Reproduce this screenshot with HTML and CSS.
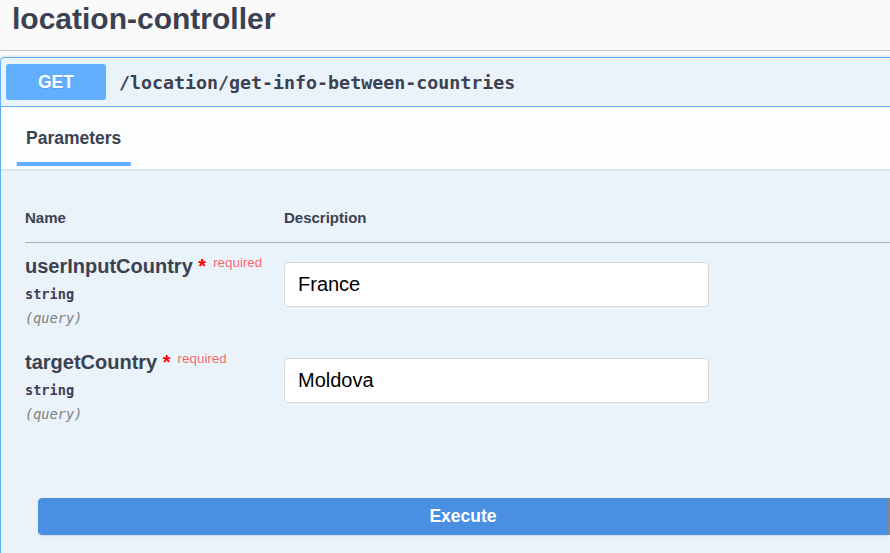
FILE: index.html
```html
<!DOCTYPE html>
<html lang="en">
<head>
<meta charset="utf-8">
<title>location-controller</title>
<link rel="stylesheet" href="styles.css">
</head>
<body>
<div class="wrap">
  <h4 class="tag">location-controller</h4>
  <div class="opblock">
    <div class="summary">
      <span class="method">GET</span>
      <span class="path">/location/get-info-between-countries</span>
    </div>
    <div class="tabs">
      <h4 class="tab">Parameters</h4>
    </div>
    <div class="params">
      <table class="ptable">
        <thead>
          <tr><th class="col-name">Name</th><th class="col-desc">Description</th></tr>
        </thead>
        <tbody>
          <tr>
            <td class="col-name">
              <div class="pname">userInputCountry<span class="star">&nbsp;*</span><span class="req">required</span></div>
              <div class="ptype">string</div>
              <div class="pin">(query)</div>
            </td>
            <td class="col-desc"><input class="pinput" type="text" value="France"></td>
          </tr>
          <tr>
            <td class="col-name">
              <div class="pname">targetCountry<span class="star">&nbsp;*</span><span class="req">required</span></div>
              <div class="ptype">string</div>
              <div class="pin">(query)</div>
            </td>
            <td class="col-desc"><input class="pinput" type="text" value="Moldova"></td>
          </tr>
        </tbody>
      </table>
    </div>
    <div class="btn-group">
      <button class="btn execute">Execute</button>
      <button class="btn clear" aria-label="Clear"></button>
    </div>
  </div>
</div>
</body>
</html>
```

FILE: styles.css
```css
html, body {
  margin: 0;
  padding: 0;
}
body {
  background: #fafafa;
  overflow: hidden;
  font-family: "Liberation Sans", Arial, sans-serif;
  color: #3b4151;
}
.wrap {
  width: 1800px;
}
.tag {
  margin: 0 0 6px 0;
  padding: 0 0 0 12px;
  height: 50px;
  line-height: 38px;
  font-size: 30px;
  font-weight: bold;
  color: #3b4151;
  border-bottom: 1px solid rgba(59, 65, 81, 0.3);
  box-sizing: content-box;
}
.opblock {
  border: 1px solid #61affe;
  border-radius: 4px;
  background: rgba(97, 175, 254, 0.1);
  box-shadow: 0 0 3px rgba(0, 0, 0, 0.19);
}
.summary {
  display: flex;
  align-items: center;
  padding: 6px 6px 6px 5px;
  height: 36px;
  border-bottom: 1px solid #61affe;
  box-sizing: content-box;
}
.method {
  width: 100px;
  height: 36px;
  line-height: 36px;
  text-align: center;
  background: #61affe;
  color: #fff;
  border-radius: 3px;
  font-size: 17.5px;
  font-weight: bold;
  text-shadow: 0 1px 0 rgba(0, 0, 0, 0.1);
}
.path {
  padding-left: 13px;
  font-family: "DejaVu Sans Mono", "Liberation Mono", monospace;
  font-size: 18.3px;
  font-weight: bold;
  color: #3b4151;
}
.tabs {
  display: flex;
  align-items: flex-start;
  height: 62px;
  padding: 0 25px;
  background: rgba(255, 255, 255, 0.8);
  box-shadow: 0 1px 2px rgba(0, 0, 0, 0.1);
}
.tab {
  position: relative;
  margin: 21px 0 0 0;
  font-size: 17.5px;
  line-height: 20px;
  font-weight: bold;
  color: #3b4151;
}
.tab::after {
  content: "";
  position: absolute;
  top: 34px;
  left: 50%;
  width: 120%;
  height: 4px;
  transform: translateX(-50%);
  background: #61affe;
}
.params {
  padding: 25px 0 25px 24px;
}
.ptable {
  border-collapse: collapse;
  width: 1600px;
}
.ptable th {
  text-align: left;
  font-size: 15px;
  line-height: 18px;
  font-weight: bold;
  padding: 15px 0;
  border-bottom: 1px solid rgba(59, 65, 81, 0.2);
}
.ptable th.col-name,
.ptable td.col-name {
  width: 259px;
}
.ptable td {
  vertical-align: top;
  padding: 11px 0 12px 0;
}
.pname {
  font-size: 20px;
  line-height: 24px;
  height: 24px;
  font-weight: bold;
  color: #3b4151;
  white-space: nowrap;
}
.star {
  color: red;
}
.req {
  position: relative;
  top: -6px;
  padding-left: 7px;
  font-size: 13.4px;
  line-height: 0;
  font-weight: normal;
  color: rgba(255, 0, 0, 0.6);
}
.ptype {
  padding: 7px 0 7px 0;
  font-family: "DejaVu Sans Mono", "Liberation Mono", monospace;
  font-size: 13.6px;
  line-height: 18px;
  font-weight: bold;
  color: #3b4151;
}
.pin {
  font-family: "DejaVu Sans Mono", "Liberation Mono", monospace;
  font-size: 13.6px;
  line-height: 17px;
  font-style: italic;
  color: #808080;
}
.pinput {
  display: block;
  margin: 8px 0 0 0;
  width: 425px;
  height: 45px;
  box-sizing: border-box;
  padding: 0 13px;
  border: 1px solid #d9d9d9;
  border-radius: 4px;
  background: #fff;
  font-family: "Liberation Sans", Arial, sans-serif;
  font-size: 20px;
  color: #000;
  outline: none;
}
.btn-group {
  display: flex;
  padding: 38px 0 30px 37px;
}
.btn {
  height: 37px;
  font-family: "Liberation Sans", Arial, sans-serif;
  font-size: 17.5px;
  font-weight: bold;
  cursor: pointer;
}
.execute {
  width: 850px;
  background: #4990e2;
  border: 1px solid #4990e2;
  color: #fff;
  border-radius: 4px 0 0 4px;
  box-shadow: 0 1px 2px rgba(0, 0, 0, 0.1);
}
.clear {
  width: 850px;
  background: transparent;
  border: 2px solid #888;
  color: #3b4151;
  border-radius: 0 4px 4px 0;
}
```
